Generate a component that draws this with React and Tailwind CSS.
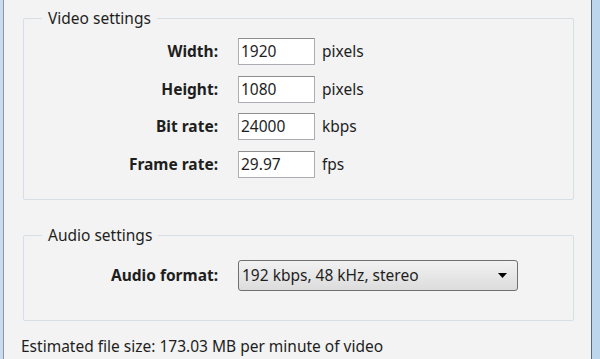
import React from 'react';

const font = { fontFamily: '"Noto Sans", "Open Sans", sans-serif' };

const Field = ({ label, value, unit }) => (
  <div className="flex items-center h-[37.5px]">
    <div className="w-[214px] text-right font-bold text-[15.5px] text-[#1e1e1e] pr-[20px]">{label}</div>
    <div className="w-[77px] h-[27px] bg-white border border-[#abadb3] border-t-[#8e8f8f] flex items-center pl-[2px] text-[15.5px] text-[#1e1e1e]">
      {value}
    </div>
    <div className="pl-[7px] text-[15.5px] text-[#1e1e1e]">{unit}</div>
  </div>
);

const Group = ({ title, className, children }) => (
  <div className={`relative border border-[#d5dfe5] rounded-[2px] ${className}`}>
    <div className="absolute -top-[11px] left-[18px] px-[6px] bg-[#f3f3f3] text-[15.5px] leading-[20px] text-[#1e1e1e]">
      {title}
    </div>
    {children}
  </div>
);

export default function App() {
  return (
    <div className="w-[600px] h-[359px] overflow-hidden flex bg-[#f3f3f3]" style={font}>
      <div className="w-[3px] bg-[#c9dcef]" />
      <div className="w-[1px] bg-[#8a98a6]" />
      <div className="flex-1 flex flex-col pl-[19px] pr-[17px]">
        <Group title="Video settings" className="mt-[18px] h-[182px] pt-[14px]">
          <Field label="Width:" value="1920" unit="pixels" />
          <Field label="Height:" value="1080" unit="pixels" />
          <Field label="Bit rate:" value="24000" unit="kbps" />
          <Field label="Frame rate:" value="29.97" unit="fps" />
        </Group>
        <Group title="Audio settings" className="mt-[35px] h-[86px] pt-[24px]">
          <div className="flex items-center">
            <div className="w-[214px] text-right font-bold text-[15.5px] text-[#1e1e1e] pr-[20px]">Audio format:</div>
            <div className="w-[280px] h-[31px] rounded-[3px] border border-[#707070] bg-gradient-to-b from-[#f2f2f2] to-[#dcdcdc] flex items-center justify-between pl-[3px] pr-[10px] text-[15.5px] text-[#1e1e1e]">
              <span>192 kbps, 48 kHz, stereo</span>
              <svg width="9" height="5" viewBox="0 0 9 5">
                <path d="M0 0 H9 L4.5 5 Z" fill="#000" />
              </svg>
            </div>
          </div>
        </Group>
        <div className="mt-[15px] -ml-[2px] text-[15.5px] text-[#1e1e1e] leading-[20px]">
          Estimated file size: 173.03 MB per minute of video
        </div>
      </div>
      <div className="w-[1px] bg-[#5d6a75]" />
      <div className="w-[8px] bg-[#bcd6ee]" />
    </div>
  );
}
